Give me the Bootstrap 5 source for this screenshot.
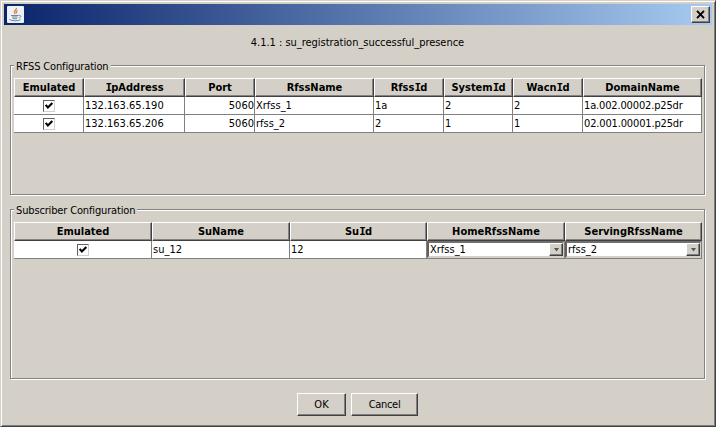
<!DOCTYPE html>
<html lang="en">
<head>
<meta charset="utf-8">
<title>Configuration</title>
<link href="https://cdn.jsdelivr.net/npm/bootstrap@5.3.0/dist/css/bootstrap.min.css" rel="stylesheet">
<style>
body { background: #fff; color: #000; font: 11px/13px "DejaVu Sans Condensed", "Liberation Sans", sans-serif; overflow: hidden; }
.dialog-frame { width: 716px; height: 427px; background: #d4d0c8; padding: 2px 0 0 2px;
  border: 1px solid; border-color: #d4d0c8 #404040 #404040 #d4d0c8;
  box-shadow: inset 1px 1px #fff, inset -1px -1px #808080; }
.title-strip { width: 708px; height: 21px; margin: 1px 0 0 1px; padding: 0 2px 0 3px; background: linear-gradient(90deg, #0a246a, #a6caf0); }
.bevel { background: #d4d0c8; border: 1px solid; border-color: #fff #404040 #404040 #fff; box-shadow: inset -1px -1px #808080; border-radius: 0; color: #000; }
.close-btn { width: 19px; height: 17px; }
.caption-line { height: 34px; padding-top: 11px; margin-left: -3px; letter-spacing: -.03px; }
.group { width: 695px; margin-left: 7px; border: 1px solid #848284; box-shadow: 1px 1px #fff, inset 1px 1px #fff; padding: 12px 3px 0; position: relative; }
.group-rfss { height: 130px; margin-top: 6px; }
.group-sub { height: 170px; margin-top: 14px; }
.group-label { position: absolute; left: 3px; top: -6px; padding: 0 2px; background: #d4d0c8; line-height: 13px; white-space: nowrap; }
.grid-table { width: 688px; table-layout: fixed; border-collapse: separate; border-spacing: 0; margin: 0; }
.grid-table th { height: 19px; padding: 0; line-height: 15px; text-align: center; background: #d4d0c8; border: 1px solid; border-color: #fff #404040 #404040 #fff; box-shadow: inset -1px -1px #848284; }
.grid-table td { height: 18px; padding: 0 0 0 1px; line-height: 15px; background: #fff; border: solid #808080; border-width: 0 1px 1px 0; white-space: nowrap; vertical-align: middle; }
/* capital I with serifs in the bold column headings */
.serif-i { font-family: "DejaVu Sans Mono", monospace; letter-spacing: -.8px; line-height: 1; }
.check-box { display: block; width: 12px; height: 12px; margin: 0 auto; background: #fff; border: 1px solid; border-color: #606060 #d4d0c8 #d4d0c8 #606060; }
.check-box svg { display: block; }
.grid-table .combo-cell { padding: 0; }
.combo { height: 17px; border: solid; border-width: 2px 1px 2px 2px; border-color: #707070 #d4d0c8 #d4d0c8 #606060; background: #fff; padding-left: 1px; }
.combo-arrow { width: 14px; height: 13px; }
.push-btn { height: 23px; padding: 0; font-size: 11px; line-height: 20px; text-align: center; }
.w-ok { width: 49px; }
.w-cancel { width: 67px; letter-spacing: -.3px; }
.actions { margin-top: 14px; gap: 5px; padding-right: 3px; }
.tight { letter-spacing: -.15px; }
</style>
</head>
<body>
<main class="dialog-frame">
  <header class="title-strip d-flex align-items-center justify-content-between">
    <svg width="17" height="17" viewBox="0 0 17 17" aria-hidden="true">
      <rect width="17" height="17" rx="1" fill="#edf0f4"/>
      <path d="M9.500 2c.6 1.700-3 2.700-2.200 4.300l1 1.700M10.500 4.500c-1.800 1-1.500 1.700-.8 2.800" fill="none" stroke="#d9813f" stroke-width="1.300"/>
      <path d="M4 9.500h7.500M5 11h5.500M5.500 12.700h4.500M11.500 9.500c3.500-.5 2.500 2.200.3 2.400M2.500 13.500c2 1.800 9 1.600 11 .2" fill="none" stroke="#6a87a0" stroke-width="1"/>
    </svg>
    <div class="close-btn bevel d-flex align-items-center justify-content-center">
      <svg width="10" height="9" viewBox="0 0 10 9" aria-hidden="true"><path d="M1 .8l7 7.400M8 .8L1 8.200" stroke="#000" stroke-width="1.900"/></svg>
    </div>
  </header>
  <div class="caption-line text-center">4.1.1 : su_registration_successful_presence</div>

  <section class="group group-rfss">
    <div class="group-label tight">RFSS Configuration</div>
    <table class="grid-table">
      <colgroup><col style="width:70px"><col style="width:101px"><col style="width:70px"><col style="width:119px"><col style="width:70px"><col style="width:69px"><col style="width:70px"><col style="width:119px"></colgroup>
      <thead><tr><th>Emulated</th><th><span class="serif-i">I</span>pAddress</th><th>Port</th><th>RfssName</th><th>Rfss<span class="serif-i">I</span>d</th><th>System<span class="serif-i">I</span>d</th><th>Wacn<span class="serif-i">I</span>d</th><th>DomainName</th></tr></thead>
      <tbody>
        <tr><td><span class="check-box"><svg width="10" height="10" viewBox="0 0 9 9"><path d="M1.500 3.500L3.500 5.800L7.500 1.800" fill="none" stroke="#000" stroke-width="1.900"/></svg></span></td><td>132.163.65.190</td><td class="text-end">5060</td><td>Xrfss_1</td><td>1a</td><td>2</td><td>2</td><td class="tight">1a.002.00002.p25dr</td></tr>
        <tr><td><span class="check-box"><svg width="10" height="10" viewBox="0 0 9 9"><path d="M1.500 3.500L3.500 5.800L7.500 1.800" fill="none" stroke="#000" stroke-width="1.900"/></svg></span></td><td>132.163.65.206</td><td class="text-end">5060</td><td>rfss_2</td><td>2</td><td>1</td><td>1</td><td class="tight">02.001.00001.p25dr</td></tr>
      </tbody>
    </table>
  </section>

  <section class="group group-sub">
    <div class="group-label tight">Subscriber Configuration</div>
    <table class="grid-table">
      <colgroup><col style="width:138px"><col style="width:138px"><col style="width:137px"><col style="width:138px"><col style="width:137px"></colgroup>
      <thead><tr><th>Emulated</th><th>SuName</th><th>Su<span class="serif-i">I</span>d</th><th>HomeRfssName</th><th>ServingRfssName</th></tr></thead>
      <tbody>
        <tr><td><span class="check-box"><svg width="10" height="10" viewBox="0 0 9 9"><path d="M1.500 3.500L3.500 5.800L7.500 1.800" fill="none" stroke="#000" stroke-width="1.900"/></svg></span></td><td>su_12</td><td>12</td>
          <td class="combo-cell"><div class="combo d-flex align-items-center justify-content-between">Xrfss_1<span class="combo-arrow bevel d-flex align-items-center justify-content-center"><svg width="7" height="4" viewBox="0 0 7 4"><path d="M1 0h5L3.500 3.500z" fill="#555"/></svg></span></div></td>
          <td class="combo-cell"><div class="combo d-flex align-items-center justify-content-between">rfss_2<span class="combo-arrow bevel d-flex align-items-center justify-content-center"><svg width="7" height="4" viewBox="0 0 7 4"><path d="M1 0h5L3.500 3.500z" fill="#555"/></svg></span></div></td></tr>
      </tbody>
    </table>
  </section>

  <footer class="actions d-flex justify-content-center">
    <button type="button" class="push-btn bevel w-ok">OK</button>
    <button type="button" class="push-btn bevel w-cancel">Cancel</button>
  </footer>
</main>
<script src="https://cdn.jsdelivr.net/npm/bootstrap@5.3.0/dist/js/bootstrap.bundle.min.js"></script>
</body>
</html>
